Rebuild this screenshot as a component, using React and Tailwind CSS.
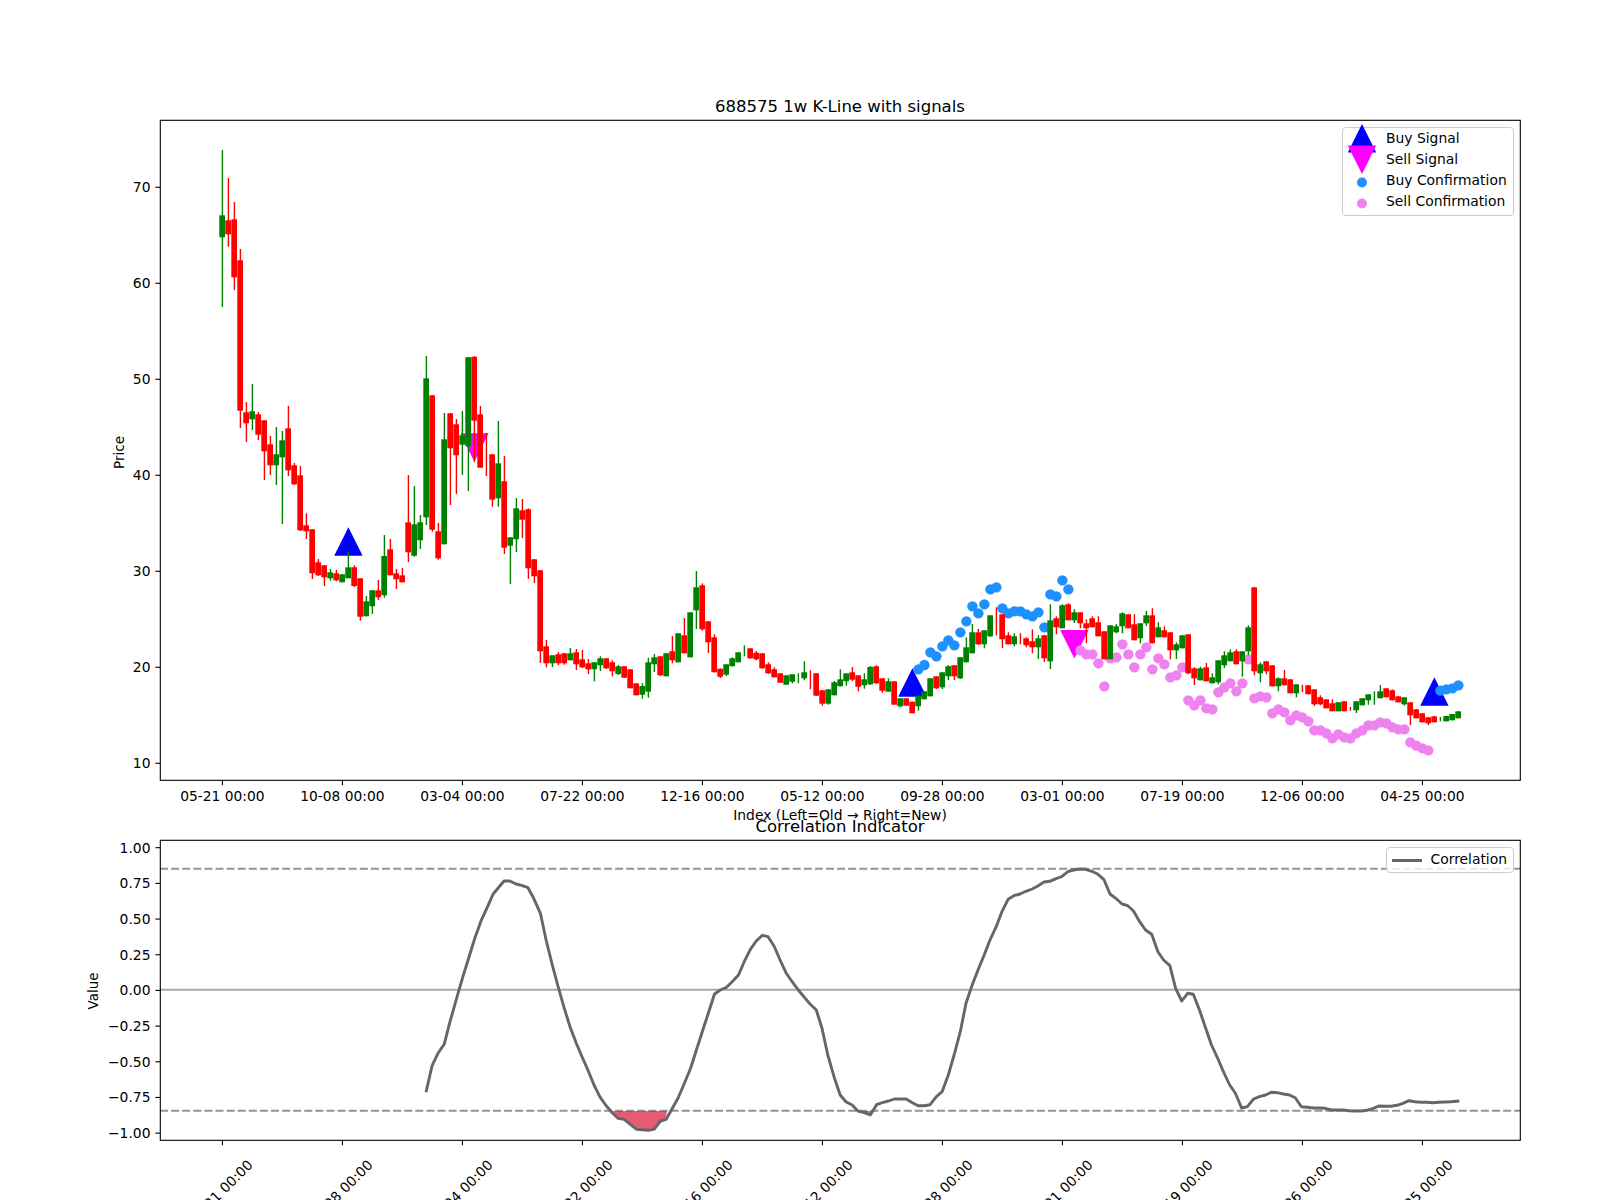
const GREEN = "#008000";
const RED = "#ff0000";
const BLUE = "#1e90ff";
const VIOLET = "#ee82ee";

// pixel values read off the chart: color, wick top, body top, body bottom, wick bottom
const candles = [
  ["g",150,215.3,237.3,307],["r",178,220.3,234.3,246.7],["r",202,219.3,277.3,290],["r",249,260.3,410.7,428],
  ["r",402,412.3,423.3,442],["g",384,411.3,419.3,430],["r",412,414.3,434.7,440],["r",420.3,420.3,451.3,480],
  ["r",436,444.3,465.3,475],["g",427,454.3,465.3,485],["g",431,440.3,457.3,524],["r",406,428.3,470.3,476],
  ["r",463,465.3,484.3,485],["r",466,475.3,530.3,531],["r",513.3,525.3,531.3,539],["r",529.3,529.3,573.3,579],
  ["r",559,562.3,575.3,576],["r",565,565.3,577.3,586],["g",569,572.3,578.3,580.7],["r",570,573.3,580.3,581.3],
  ["g",574.3,574.3,582.3,582.3],["g",552,567.3,578.3,578.3],["r",565.3,567.3,586,587],["r",578.3,578.3,616.7,620.7],
  ["g",596,601.3,616.3,616.3],["g",590.3,590.3,606.3,614],["r",580,590.3,597.3,600],["g",535,556,595.3,597.7],
  ["r",539,549.3,575.3,575.3],["r",569,573.3,579.3,589],["r",568,575.3,582.3,582.3],["r",475,522.3,552.3,562],
  ["g",486,524.3,555.7,556.7],["g",515,522.3,540.3,549],["g",356,378.3,517.3,525],["r",395.3,395.3,529.7,531.7],
  ["r",523,531.3,558.3,559.7],["g",413,439.3,544.3,544.3],["r",413,413.3,448.3,505],["r",419,424.3,455.3,494],
  ["g",411,435.3,444.7,475],["g",357,357.3,446.3,491],["r",356.3,356.7,420.7,462],["r",406,414.3,467.7,467.7],
  ["r",433,450,450,476],["r",454,454.3,499.7,506.7],["g",421,463.3,498.3,506.7],["r",456,481.3,547.7,554],
  ["g",537.3,537.3,545.7,584],["g",498,508.3,539.3,552],["r",499,510.3,519.7,538],["r",508.3,509.3,568.3,579],
  ["r",559,559.3,576.3,583],["r",570,570.3,651.3,663],["r",640,646.3,663.3,667.3],["g",655.3,655.3,663.3,667],
  ["r",652,654.3,663.3,665.3],["r",653,653.3,663.3,664.7],["g",648,653.3,660.3,660.3],["r",649,652.3,664.3,670],
  ["r",650,659.3,667.3,668],["r",659,663.3,669.3,674],["g",662.3,662.3,669.3,681.3],["g",656.3,658.3,665.3,671],
  ["r",658.3,658.3,668.3,669],["r",660.3,662.3,671.3,676.3],["g",665,666.3,674,675],["r",666.3,666.3,677.7,678],
  ["r",669.3,669.3,688.3,688.3],["r",683.3,683.3,695.3,695.3],["g",683.3,686,694.7,698.7],["g",657.7,662.3,691.7,697.7],
  ["g",654,657.3,664.3,672],["r",656.3,656.3,675.3,676],["g",653.3,653.3,676.3,676.3],["r",636,651.3,660.3,663.3],
  ["g",633.3,633.3,662.3,662.3],["r",618,635.3,653.3,653.3],["g",612.3,612.3,657.3,657.3],["g",571,587.3,610.3,629],
  ["r",583.3,585.3,629.3,630.7],["r",621.3,621.3,642.3,653],["r",634.3,637.3,672.3,672.3],["r",668.7,668.7,676.7,678],
  ["g",664.3,664.3,674.7,676],["g",657.3,658.3,666.3,666.3],["g",652.3,652.3,662.3,662.3],["g",645.3,650,650,656.3],
  ["r",648.3,648.3,658.3,658.7],["r",651,652.7,659.3,660.3],["r",653.3,653.3,668.3,668.7],["r",662.3,664.3,673.3,674],
  ["r",667.3,669.3,677.3,677.3],["r",673.3,673.3,682.7,682.7],["g",675.3,675.3,684.7,684.7],["g",674.3,674.3,681.7,683.3],
  ["g",673.3,678,678,683.3],["g",661.3,672.3,678.3,680.3],["r",670.3,680,680,689.3],["r",673.3,673.3,695.7,695.7],
  ["r",690.3,690.3,703.7,705.7],["g",689.3,689.3,703.7,704.7],["g",681,682.3,695.3,695.3],["g",669.3,679.3,686.3,686.3],
  ["g",673.3,673.3,681.3,685.7],["r",667,672.3,679.7,681],["r",675.3,675.3,686.7,691.3],["g",673.3,679.3,685.3,688.7],
  ["g",666,667,684.3,685],["r",665.3,666.3,683.3,684],["r",678.3,678.3,690.7,692.7],["g",678.3,681.3,691.7,691.7],
  ["r",681.3,681.3,704.7,704.7],["g",698.3,698.3,706.3,707.3],["r",698.3,698.3,705.7,705.7],["r",701.7,701.7,713.3,713.3],
  ["g",695.7,695.7,706.3,710.7],["g",691.3,691.3,699.3,699.3],["g",678.3,678.3,696.3,696.3],["r",676.3,676.3,688.3,689],
  ["g",672.3,672.3,687.3,689],["g",665,666.3,676.3,680],["r",665,665.3,676.3,680],["g",657.3,657.3,678.3,679],
  ["g",637.3,647.3,662.3,662.3],["g",624,632.3,653.3,653.3],["r",629,632.3,644.3,645],["g",630.3,630.3,644.3,648.3],
  ["g",615.3,615.3,636.3,637],["r",607.3,620,620,635.3],["r",614.3,614.3,639.3,648],["r",632.3,635.3,644.3,644.3],
  ["g",633.3,636.3,644.3,646.3],["r",633.3,640,640,644.3],["r",637.3,638.3,645.3,647.3],["r",629.3,641.3,647.3,653.3],
  ["g",635,638.3,647.3,659],["r",635,635.3,658.3,662],["g",604.3,620.3,661.3,669],["r",616.3,618.3,627.3,634.3],
  ["g",604.3,605.3,628.3,628.3],["r",603.3,604.3,620.3,620.3],["g",609.3,612.3,620.3,623],["r",612.3,612.3,623.3,628.3],
  ["r",619.3,623.3,628.3,643.3],["r",616.3,618.3,627.3,627.3],["r",616.3,622.3,636.3,636.3],["r",631.3,631.3,659.3,659.3],
  ["g",625.3,625.3,659.3,659.3],["g",624,626.3,632.3,633.3],["g",612.3,613.3,626.3,633.3],["r",614.3,614.3,628.3,628.3],
  ["r",614.3,624.3,640.3,640.3],["g",623.3,623.3,638.3,643.3],["g",611,615.3,623.3,626],["r",608.3,615.3,643.3,643.3],
  ["g",622.3,627.3,637.3,637.3],["r",626.3,630.3,637.3,637.3],["r",632.3,632.3,650.3,659.3],["g",642.3,644.3,650.3,659],
  ["g",635.3,635.3,648.3,648.3],["r",634.3,634.3,673.3,674],["r",667.3,668.3,678.3,685],["g",666.7,668.3,680.3,680.3],
  ["r",663,667.3,681.3,681.3],["g",673.3,677.3,683.3,683.3],["g",660.3,660.3,682.3,684.3],["g",651.3,655.3,665.3,668],
  ["g",649.3,652.3,661.3,661.3],["r",649.3,651.3,664.3,664.3],["g",651.3,651.3,661.3,676.7],["g",625.3,627.3,651.3,655.3],
  ["r",587.3,587.3,671.3,675.3],["g",662.3,664.3,673.3,682.3],["r",661.3,661.3,671.3,674.3],["r",665.3,665.3,686.3,686.3],
  ["g",677.3,678.3,686.3,691.3],["r",670,678.3,685.3,685.3],["r",679.3,679.3,693.3,693.3],["g",684.3,684.3,693.3,697.3],
  ["r",684.7,688,688,692],["r",685.3,685.3,694.3,694.3],["r",689.3,689.3,704.3,706],["r",695.3,697.3,704.3,705.3],
  ["r",699.3,699.3,708.3,708.3],["r",699.3,703.3,711.3,711.3],["g",702.3,702.3,711.3,711.3],["r",701.3,701.3,711.3,711.3],
  ["r",707,708,708,710.7],["g",701.3,701.3,710.3,713],["g",698.3,698.3,705.3,705.3],["g",694.3,694.3,700.3,704.7],
  ["g",691.3,698,698,704.7],["g",685,691.3,698.3,698.3],["r",688.3,688.3,697.3,697.3],["r",689.3,690.3,700.3,700.3],
  ["r",696.3,696.3,702.3,702.3],["g",697.3,697.3,704.3,705.7],["r",702.3,702.3,715.3,725.3],["r",709.3,709.3,718.3,718.3],
  ["r",713.3,713.3,722.3,722.3],["r",717.3,717.3,723.3,725],["r",716.3,716.3,722.3,722.3],["g",717,719,719,721.3],
  ["g",716,716,721.3,721.3],["g",714,714,720.3,720.3],["g",711.3,711.3,718.3,718.3],
];

const xAt = (i) => 222.4 + 6 * i;

const buyDots = [
  388,375,337,349,319,301,316,277,244,199,220,193,148,142,205,220,214,214,223,229,217,262,163,169,121,148,
].map((y, k) => [xAt(116 + k), 540 + y / 3]);
const buyDotsEnd = [332,328,325,316].map((y, k) => [xAt(203 + k), 580 + y / 3]);

const sellDotsA = [
  331,343,343,370,439,355,352,313,343,382,343,322,388,355,373,412,406,382,481,496,481,505,
].map((y, k) => [xAt(143 + k), 540 + y / 3]);
const sellDotsB = [
  388,337,322,310,334,310,238,355,349,352,400,388,397,421,406,412,424,451,451,460,475,463,472,475,460,451,436,436,427,430,442,448,448,487,497,505,511,
].map((y, k) => [xAt(165 + k), 580 + y / 3]);

const corrLeft = [
  [765,877],[778,796],[790,760],[803,733],[815,665],[830,590],[842,530],[855,470],[867,415],[880,362],[892,325],[905,283],[917,262],[928,243],[940,243],[953,252],[965,256],[978,263],[990,295],[1004,340],[1016,420],[1029,495],[1041,560],[1054,625],[1066,680],[1079,730],[1091,770],[1104,812],[1116,855],[1129,892],[1142,918],[1154,938],[1166,955],[1179,958],[1192,973],[1205,988],[1217,989],[1230,991],[1242,987],[1255,963],[1267,958],[1280,925],[1292,893],[1305,850],[1318,805],[1330,750],[1343,692],[1355,640],[1368,582],[1380,570],[1393,562],[1405,545],[1418,525],[1430,485],[1443,448],[1455,423],[1468,406],[1480,410],[1493,440],[1505,480],[1518,520],[1530,545],[1543,570],
].map(([x, y]) => [60 + x / 2.09, 800 + y / 3]);

const corrRight = [
  [8,590],[21,612],[34,630],[46,685],[58,765],[71,830],[84,885],[96,905],[109,915],[121,933],[134,938],[147,945],[160,914],[172,908],[185,903],[197,897],[210,897],[222,897],[235,908],[247,917],[260,917],[272,914],[285,890],[297,875],[310,825],[322,765],[335,695],[347,610],[360,555],[372,510],[385,465],[397,420],[410,380],[422,335],[435,298],[447,287],[460,282],[472,274],[485,267],[497,258],[510,246],[522,244],[535,236],[547,230],[560,215],[572,210],[585,207],[597,208],[610,214],[622,222],[635,238],[648,282],[660,295],[673,312],[685,317],[697,333],[710,365],[722,390],[735,403],[748,455],[760,480],[773,497],[785,565],[798,603],[810,580],[822,583],[835,630],[848,685],[860,735],[873,775],[885,815],[898,855],[910,880],[923,924],[935,920],[948,897],[960,890],[973,885],[985,877],[998,878],[1010,882],[1023,885],[1035,893],[1048,920],[1060,922],[1073,924],[1085,924],[1098,925],[1110,930],[1123,930],[1135,930],[1148,932],[1160,933],[1173,933],[1185,931],[1198,925],[1210,918],[1223,919],[1235,919],[1248,916],[1260,910],[1273,902],[1285,905],[1298,907],[1310,907],[1323,908],[1335,907],[1348,906],[1360,905],[1378,903],
].map(([x, y]) => [800 + x / 2.09, 800 + y / 3]);

const corrPoints = [...corrLeft, ...corrRight].map(([x, y]) => `${x.toFixed(1)},${y.toFixed(1)}`).join(" ");

const fillA = [[1154,933],[1166,955],[1179,958],[1192,973],[1205,988],[1217,989],[1230,991],[1242,987],[1255,963],[1267,958],[1268,933]]
  .map(([x, y]) => `${(60 + x / 2.09).toFixed(1)},${(800 + y / 3).toFixed(1)}`).join(" ");
const fillB = [[121,933],[134,938],[147,945],[152,933]]
  .map(([x, y]) => `${(800 + x / 2.09).toFixed(1)},${(800 + y / 3).toFixed(1)}`).join(" ");

const dates = ["05-21 00:00","10-08 00:00","03-04 00:00","07-22 00:00","12-16 00:00","05-12 00:00","09-28 00:00","03-01 00:00","07-19 00:00","12-06 00:00","04-25 00:00"];
const priceTicks = [10,20,30,40,50,60,70];
const valueTicks = ["1.00","0.75","0.50","0.25","0.00","−0.25","−0.50","−0.75","−1.00"];

function Triangle({ x, y, down, color }) {
  // y is the flat edge
  const tip = down ? y + 28.4 : y - 28.4;
  return <polygon points={`${x - 14.2},${y} ${x + 14.2},${y} ${x},${tip}`} fill={color} />;
}

function Candle({ i, data }) {
  const [c, wt, bt, bb, wb] = data;
  const color = c === "g" ? GREEN : RED;
  const x = xAt(i);
  return (
    <g>
      <line x1={x} x2={x} y1={wt} y2={wb} stroke={color} strokeWidth="1.4" />
      {bb > bt && <rect x={x - 3.1} y={bt} width="5.7" height={bb - bt} fill={color} />}
    </g>
  );
}

function PriceChart() {
  return (
    <svg viewBox="160 120 1360 660" className="w-[1360px] h-[660px] overflow-visible" fontSize="13.89" fill="#000">
      <Triangle x={xAt(21)} y={555.7} color="#0000ff" />
      <Triangle x={xAt(115)} y={696.7} color="#0000ff" />
      <Triangle x={xAt(202)} y={705.7} color="#0000ff" />
      <Triangle x={xAt(42)} y={433.3} down color="#ff00ff" />
      <Triangle x={xAt(142)} y={630} down color="#ff00ff" />
      {buyDots.concat(buyDotsEnd).map(([x, y], k) => <circle key={k} cx={x} cy={y} r="5.2" fill={BLUE} />)}
      {sellDotsA.concat(sellDotsB).map(([x, y], k) => <circle key={k} cx={x} cy={y} r="5.2" fill={VIOLET} />)}
      {candles.map((d, i) => <Candle key={i} i={i} data={d} />)}
      <rect x="160.3" y="120.3" width="1360" height="660" fill="none" stroke="#000" strokeWidth="1.1" />
      {dates.map((d, k) => (
        <g key={d}>
          <line x1={xAt(20 * k)} x2={xAt(20 * k)} y1="780.3" y2="785.2" stroke="#000" strokeWidth="1.1" />
          <text x={xAt(20 * k)} y="801" textAnchor="middle" fontSize="13.8">{d}</text>
        </g>
      ))}
      {priceTicks.map((p) => {
        const y = 763.3 - (p - 10) * 9.6;
        return (
          <g key={p}>
            <line x1="155.4" x2="160.3" y1={y} y2={y} stroke="#000" strokeWidth="1.1" />
            <text x="150.5" y={y + 5} textAnchor="end">{p}</text>
          </g>
        );
      })}
      <text x="840" y="820" textAnchor="middle">Index (Left=Old → Right=New)</text>
      <text transform="translate(124 452.5) rotate(-90)" textAnchor="middle" fontSize="13.6">Price</text>
    </svg>
  );
}

function CorrelationChart() {
  return (
    <svg viewBox="160 840 1360 300" className="w-[1360px] h-[300px] overflow-visible" fontSize="13.89" fill="#000">
      <line x1="160" x2="1520" y1="989.8" y2="989.8" stroke="#aaaaaa" strokeWidth="2" />
      <line x1="160" x2="1520" y1="868.7" y2="868.7" stroke="#949494" strokeWidth="2" strokeDasharray="8 3.1" />
      <line x1="160" x2="1520" y1="1110.8" y2="1110.8" stroke="#949494" strokeWidth="2" strokeDasharray="8 3.1" />
      <polygon points={fillA} fill="#dc143c" fillOpacity="0.7" />
      <polygon points={fillB} fill="#dc143c" fillOpacity="0.7" />
      <polyline points={corrPoints} fill="none" stroke="#666666" strokeWidth="2.9" strokeLinejoin="round" />
      <rect x="160.3" y="840.3" width="1360" height="300" fill="none" stroke="#000" strokeWidth="1.1" />
      {dates.map((d, k) => (
        <g key={d}>
          <line x1={xAt(20 * k)} x2={xAt(20 * k)} y1="1140.3" y2="1145.2" stroke="#000" strokeWidth="1.1" />
          <text transform={`translate(${xAt(20 * k) - 2} 1192) rotate(-45)`} textAnchor="middle" dominantBaseline="central" fontSize="13.8">{d}</text>
        </g>
      ))}
      {valueTicks.map((v, k) => {
        const y = 847.7 + k * 35.68;
        return (
          <g key={v}>
            <line x1="155.4" x2="160.3" y1={y} y2={y} stroke="#000" strokeWidth="1.1" />
            <text x="150.5" y={y + 5} textAnchor="end">{v}</text>
          </g>
        );
      })}
      <text transform="translate(98 991) rotate(-90)" textAnchor="middle" fontSize="13.4">Value</text>
    </svg>
  );
}

function LegendRow({ icon, label }) {
  return (
    <div className="flex items-center h-[21px]">
      <svg viewBox="-14 -14 28 28" className="w-[28px] h-[28px] shrink-0 overflow-visible ml-[5px] -my-[4px]">{icon}</svg>
      <span className="ml-[10px]">{label}</span>
    </div>
  );
}

function PriceLegend() {
  return (
    <div className="absolute left-[1182px] top-[7px] w-[172px] h-[89px] bg-white/80 border border-[#cccccc] rounded-[4px] text-[13.89px] leading-none text-black">
      <div className="mt-[0.5px]">
        <LegendRow label="Buy Signal" icon={<polygon points="-14.2,14 14.2,14 0,-14.4" fill="#0000ff" transform="translate(0 -0.5)" />} />
        <LegendRow label="Sell Signal" icon={<polygon points="-14.2,-14 14.2,-14 0,14.4" fill="#ff00ff" transform="translate(0 -0.5)" />} />
        <LegendRow label="Buy Confirmation" icon={<circle r="5" cy="1.5" fill={BLUE} />} />
        <LegendRow label="Sell Confirmation" icon={<circle r="5" cy="1.5" fill={VIOLET} />} />
      </div>
    </div>
  );
}

function CorrelationLegend() {
  return (
    <div className="absolute left-[1226px] top-[7px] w-[127.5px] h-[26px] bg-white/80 border border-[#cccccc] rounded-[4px] text-[13.89px] leading-none text-black flex items-center">
      <span className="w-[30px] h-[3px] bg-[#666666] ml-[5px]"></span>
      <span className="ml-[8.5px]">Correlation</span>
    </div>
  );
}

export default function App() {
  return (
    <div className="w-[1600px] h-[1200px] overflow-hidden bg-white pl-[160px] font-['DejaVu_Sans',sans-serif] text-black">
      <div className="w-[1360px] h-[120px] flex items-end justify-center pb-[5px] text-[16.5px] leading-none">
        688575 1w K-Line with signals
      </div>
      <div className="relative w-[1360px] h-[660px]">
        <PriceChart />
        <PriceLegend />
      </div>
      <div className="w-[1360px] h-[60px] flex items-end justify-center pb-[5px] text-[16.5px] leading-none">
        Correlation Indicator
      </div>
      <div className="relative w-[1360px] h-[300px]">
        <CorrelationChart />
        <CorrelationLegend />
      </div>
    </div>
  );
}
